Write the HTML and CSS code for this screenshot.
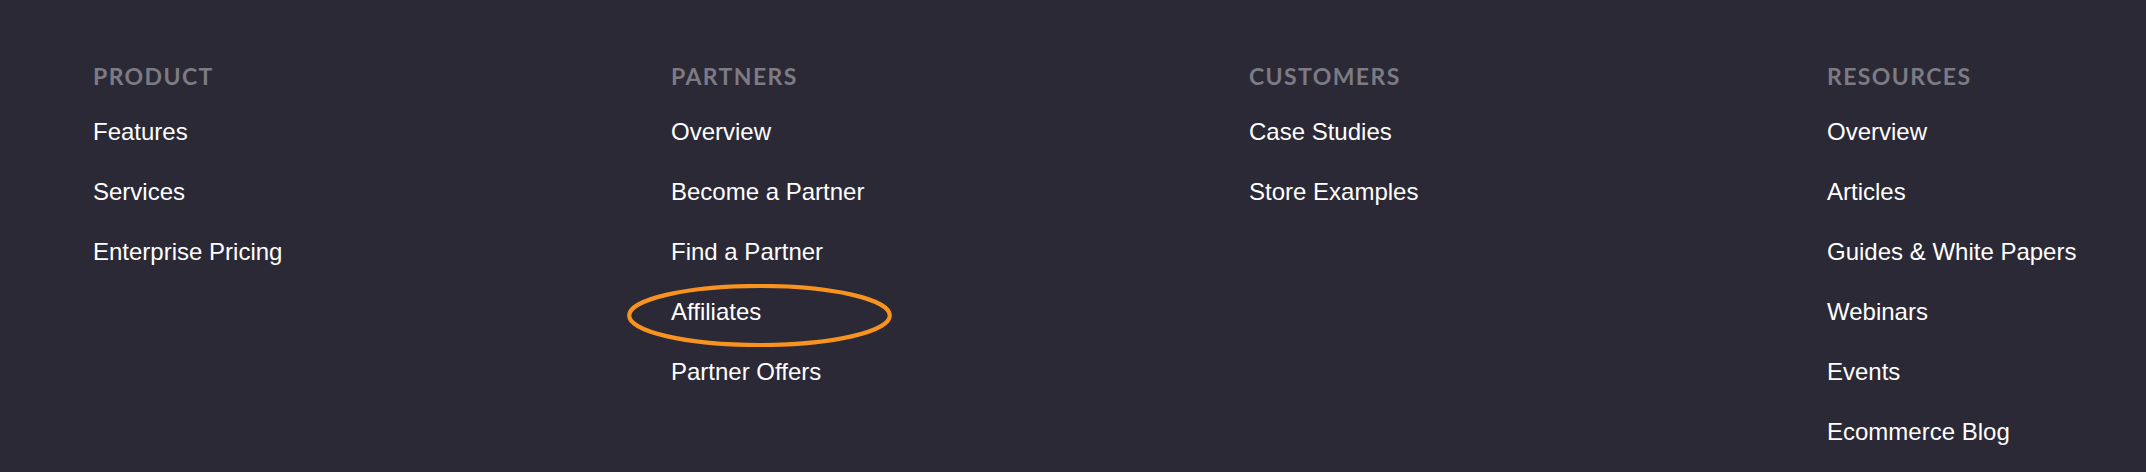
FILE: index.html
```html
<!DOCTYPE html>
<html lang="en">
<head>
<meta charset="utf-8">
<title>Footer links</title>
<link rel="stylesheet" href="styles.css">
</head>
<body>
<footer class="footer">
  <nav class="columns">
    <section class="col">
      <h3 class="col-title">Product</h3>
      <ul class="links">
        <li><a href="#">Features</a></li>
        <li><a href="#">Services</a></li>
        <li><a href="#">Enterprise Pricing</a></li>
      </ul>
    </section>
    <section class="col">
      <h3 class="col-title">Partners</h3>
      <ul class="links">
        <li><a href="#">Overview</a></li>
        <li><a href="#">Become a Partner</a></li>
        <li><a href="#">Find a Partner</a></li>
        <li class="circled"><a href="#">Affiliates</a>
          <svg class="circle" width="265" height="63" viewBox="0 0 265 63" aria-hidden="true">
            <ellipse cx="132.5" cy="31.5" rx="130.3" ry="29.5" fill="none" stroke="#f7931e" stroke-width="4.2"/>
          </svg>
        </li>
        <li><a href="#">Partner Offers</a></li>
      </ul>
    </section>
    <section class="col">
      <h3 class="col-title">Customers</h3>
      <ul class="links">
        <li><a href="#">Case Studies</a></li>
        <li><a href="#">Store Examples</a></li>
      </ul>
    </section>
    <section class="col">
      <h3 class="col-title">Resources</h3>
      <ul class="links">
        <li><a href="#">Overview</a></li>
        <li><a href="#">Articles</a></li>
        <li><a href="#">Guides &amp; White Papers</a></li>
        <li><a href="#">Webinars</a></li>
        <li><a href="#">Events</a></li>
        <li><a href="#">Ecommerce Blog</a></li>
      </ul>
    </section>
  </nav>
</footer>
</body>
</html>
```
FILE: styles.css
```css
html, body {
  margin: 0;
  padding: 0;
  background: #2b2936;
}
body {
  width: 2146px;
  height: 472px;
  overflow: hidden;
}
.footer {
  height: 472px;
  box-sizing: border-box;
  padding: 61px 0 0 93px;
  background: #2b2936;
}
.columns {
  display: grid;
  grid-template-columns: 578px 578px 578px 1fr;
}
.col-title {
  margin: 0 0 11px 0;
  font-family: Lato, "Open Sans", sans-serif;
  font-weight: 700;
  font-size: 23px;
  line-height: 30px;
  letter-spacing: 1.4px;
  text-transform: uppercase;
  color: #7c7b83;
}
.links {
  list-style: none;
  margin: 0;
  padding: 0;
}
.links li {
  height: 60px;
  line-height: 60px;
  font-family: "Liberation Sans", Arial, sans-serif;
  font-size: 24px;
}
.links a {
  color: #ffffff;
  text-decoration: none;
}
.circled {
  position: relative;
}
.circle {
  position: absolute;
  left: -44px;
  top: 2px;
  pointer-events: none;
}
```
